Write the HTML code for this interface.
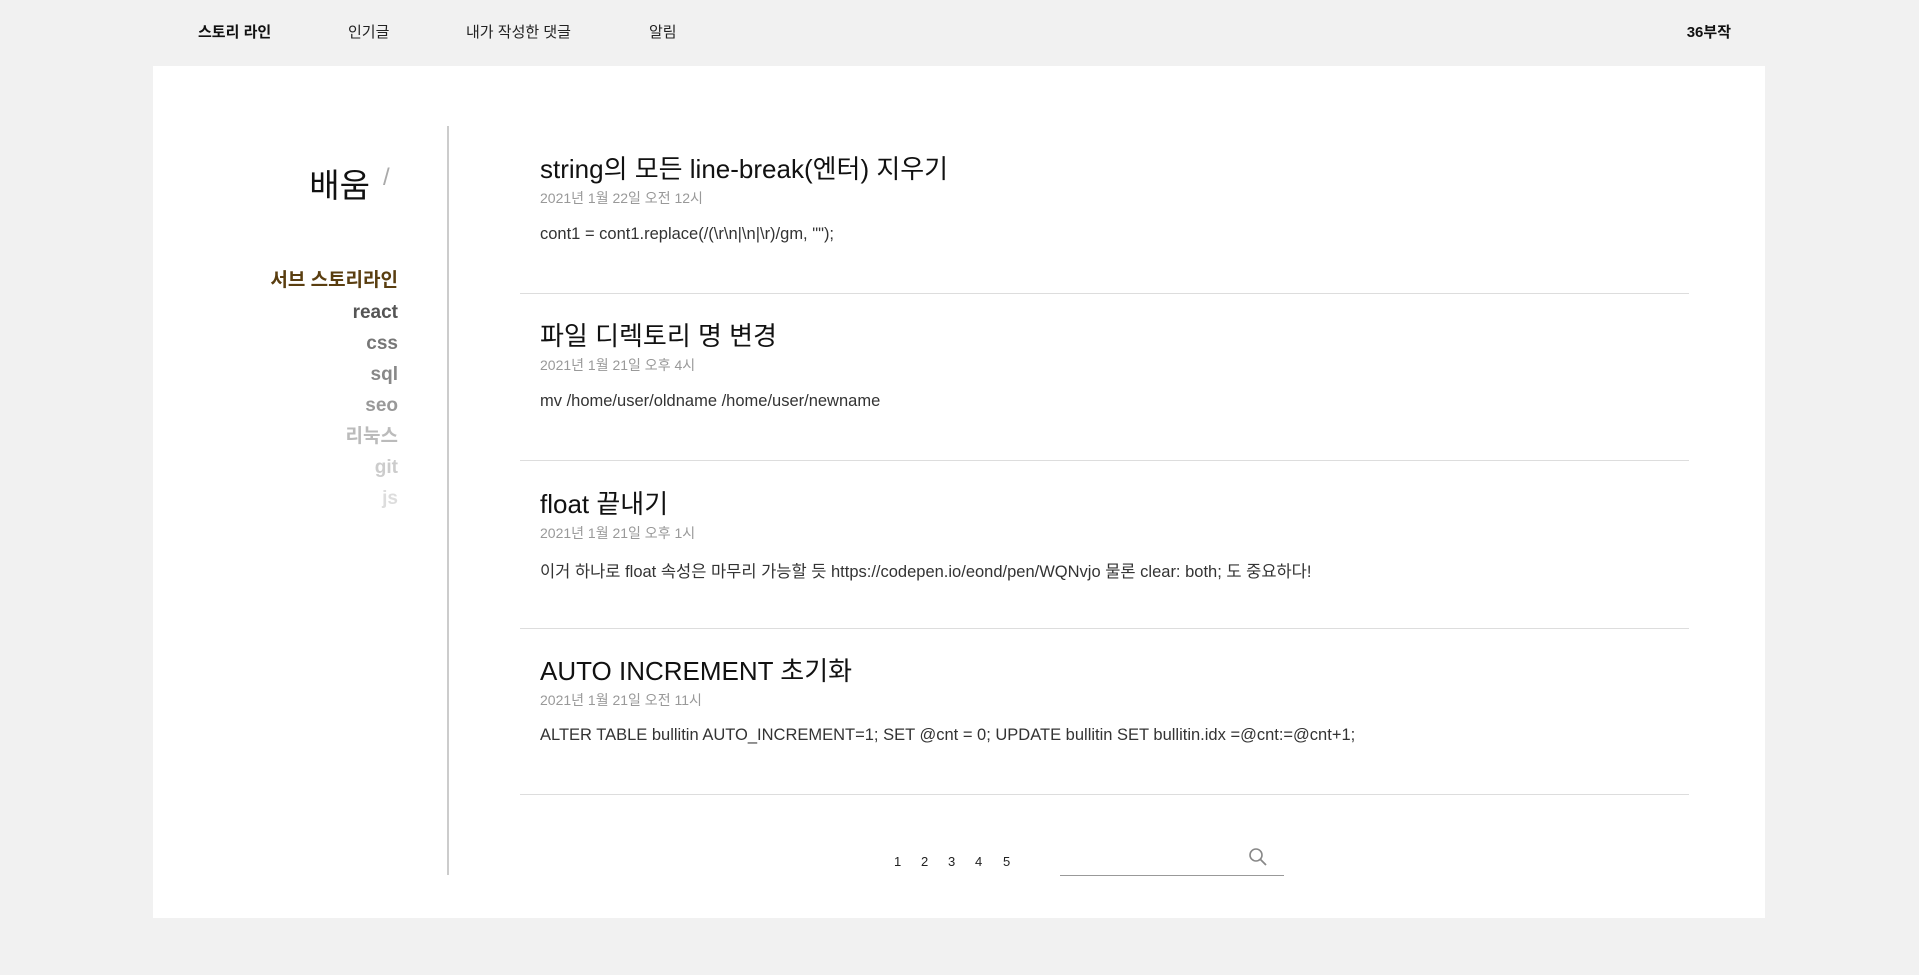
<!DOCTYPE html>
<html><head><meta charset="utf-8"><style>
*{margin:0;padding:0;box-sizing:border-box}
body{width:1919px;height:975px;background:#f1f1f1;font-family:"Liberation Sans","Noto Sans CJK KR",sans-serif;position:relative;overflow:hidden;color:#111}
.a{position:absolute;white-space:nowrap}
.nav{font-size:15px;top:21px;color:#222}
.panel{position:absolute;left:153px;top:66px;width:1612px;height:852px;background:#fff}
.vl{position:absolute;left:447px;top:126px;width:2px;height:749px;background:#ccc}
.side{right:1521px;font-size:19px;font-weight:bold;line-height:22px}
.t{left:540px;font-size:26px;color:#111}
.d{left:540px;font-size:14px;color:#999}
.c{left:540px;font-size:16.5px;color:#333}
.sep{position:absolute;left:520px;width:1169px;height:1px;background:#ddd}
.pg{font-size:13px;top:854px;color:#222}
</style></head><body>
<div class="a nav" style="left:198px;font-weight:bold;color:#111">스토리 라인</div>
<div class="a nav" style="left:348px">인기글</div>
<div class="a nav" style="left:466px">내가 작성한 댓글</div>
<div class="a nav" style="left:649px">알림</div>
<div class="a nav" style="right:188px;font-weight:bold;color:#111">36부작</div>
<div class="panel"></div>
<div class="vl"></div>
<div class="a" style="right:1549px;top:159px;font-size:33px;color:#111">배움</div>
<div class="a" style="left:383px;top:164px;font-size:24px;color:#aaa">/</div>
<div class="a side" style="top:270px;color:#5a3e10">서브 스토리라인</div>
<div class="a side" style="top:302px;color:#555">react</div>
<div class="a side" style="top:333px;color:#777">css</div>
<div class="a side" style="top:364px;color:#888">sql</div>
<div class="a side" style="top:395px;color:#999">seo</div>
<div class="a side" style="top:426px;color:#bbb">리눅스</div>
<div class="a side" style="top:457px;color:#ccc">git</div>
<div class="a side" style="top:488px;color:#ddd">js</div>

<div class="a t" style="top:149px">string의 모든 line-break(엔터) 지우기</div>
<div class="a d" style="top:188px">2021년 1월 22일 오전 12시</div>
<div class="a c" style="top:225px">cont1 = cont1.replace(/(\r\n|\n|\r)/gm, "");</div>
<div class="sep" style="top:293px"></div>
<div class="a t" style="top:316px">파일 디렉토리 명 변경</div>
<div class="a d" style="top:355px">2021년 1월 21일 오후 4시</div>
<div class="a c" style="top:392px">mv /home/user/oldname /home/user/newname</div>
<div class="sep" style="top:460px"></div>
<div class="a t" style="top:484px">float 끝내기</div>
<div class="a d" style="top:523px">2021년 1월 21일 오후 1시</div>
<div class="a c" style="top:558px">이거 하나로 float 속성은 마무리 가능할 듯 https://codepen.io/eond/pen/WQNvjo 물론 clear: both; 도 중요하다!</div>
<div class="sep" style="top:628px"></div>
<div class="a t" style="top:651px">AUTO INCREMENT 초기화</div>
<div class="a d" style="top:690px">2021년 1월 21일 오전 11시</div>
<div class="a c" style="top:726px">ALTER TABLE bullitin AUTO_INCREMENT=1; SET @cnt = 0; UPDATE bullitin SET bullitin.idx =@cnt:=@cnt+1;</div>
<div class="sep" style="top:794px"></div>

<div class="a pg" style="left:894px">1</div>
<div class="a pg" style="left:921px">2</div>
<div class="a pg" style="left:948px">3</div>
<div class="a pg" style="left:975px">4</div>
<div class="a pg" style="left:1003px">5</div>
<div style="position:absolute;left:1060px;top:875px;width:224px;height:1px;background:#999"></div>
<svg class="a" style="left:1248px;top:847px" width="20" height="20" viewBox="0 0 20 20"><circle cx="8" cy="8" r="6" fill="none" stroke="#888" stroke-width="1.6"/><line x1="12.5" y1="12.5" x2="18" y2="18" stroke="#888" stroke-width="1.8"/></svg>
</body></html>
